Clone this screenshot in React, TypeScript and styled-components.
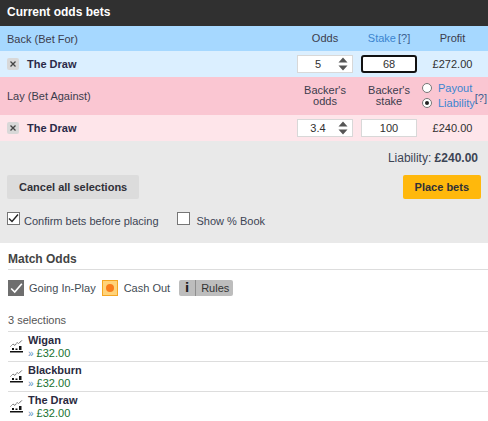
import React from "react";
import styled, { createGlobalStyle } from "styled-components";

const Global = createGlobalStyle`
  html, body { margin: 0; padding: 0; background: #fff; }
  body { font-family: "Liberation Sans", Arial, sans-serif; font-size: 11px; color: #303030; }
  * { box-sizing: border-box; }
`;

const Page = styled.div`
  width: 488px;
  height: 421px;
  overflow: hidden;
`;

const Title = styled.div`
  height: 26px;
  background: #303030;
  color: #fff;
  font-weight: 700;
  font-size: 12px;
  line-height: 24px;
  padding-left: 7px;
`;

const Grid = styled.div<{ $bg: string; $h: number }>`
  display: grid;
  grid-template-columns: 297px 56px 8px 56px 71px;
  align-items: center;
  height: ${(p) => p.$h}px;
  background: ${(p) => p.$bg};
`;

const SideLabel = styled.div`
  padding-left: 7px;
  color: #3c3c4c;
`;

const HeadCell = styled.div<{ $col: number }>`
  grid-column: ${(p) => p.$col};
  text-align: center;
  line-height: 11px;
  color: #3c3c4c;
  white-space: nowrap;
`;

const Link = styled.span`
  color: #3b85d0;
`;

const Help = styled.span`
  color: #3b5f90;
  margin-left: 2px;
`;

const Name = styled.div`
  display: flex;
  align-items: center;
  padding-left: 7px;
  font-weight: 700;
  color: #2a2a48;
`;

const Close = styled.span`
  width: 12px;
  height: 12px;
  margin-right: 8px;
  border-radius: 2px;
  background: #d8d8d8;
  display: flex;
  align-items: center;
  justify-content: center;
`;

const InputBox = styled.div<{ $focus?: boolean }>`
  grid-column: ${(p) => (p.$focus !== undefined ? 4 : 2)};
  position: relative;
  height: 18px;
  background: #fff;
  border: ${(p) => (p.$focus ? "2px solid #111" : "1px solid #d8d8d8")};
  border-radius: ${(p) => (p.$focus ? "3px" : "0")};
  text-align: center;
  line-height: ${(p) => (p.$focus ? "14px" : "16px")};
`;

const OddsValue = styled.span`
  display: block;
  width: 40px;
  text-align: center;
`;

const Spinner = styled.svg`
  position: absolute;
  right: 4px;
  top: 1px;
`;

const Profit = styled.div`
  grid-column: 5;
  text-align: center;
  color: #303030;
`;

const RadioStack = styled.div`
  grid-column: 5;
  position: relative;
  display: flex;
  flex-direction: column;
  gap: 1px;
  height: 30px;
  margin-left: 5px;
`;

const RadioRow = styled.div`
  display: flex;
  align-items: center;
  height: 14px;
  gap: 6px;
  color: #3b85d0;
`;

const Radio = styled.span<{ $on?: boolean }>`
  width: 10px;
  height: 10px;
  border-radius: 50%;
  border: 1px solid #767676;
  background: #fff;
  display: flex;
  align-items: center;
  justify-content: center;
  &::after {
    content: "";
    width: 4px;
    height: 4px;
    border-radius: 50%;
    background: ${(p) => (p.$on ? "#222" : "transparent")};
  }
`;

const RadioHelp = styled.span`
  position: absolute;
  right: 1px;
  top: 11px;
  color: #3b5f90;
`;

const Panel = styled.div`
  height: 102px;
  background: #e9e9e9;
  padding: 9px 7px 0;
`;

const LiabilityLine = styled.div`
  text-align: right;
  padding-right: 3px;
  line-height: 16px;
  font-size: 12px;
  color: #3c4454;
`;

const Buttons = styled.div`
  display: flex;
  justify-content: space-between;
  margin-top: 9px;
`;

const Button = styled.div<{ $primary?: boolean }>`
  height: 24px;
  line-height: 24px;
  border-radius: 2px;
  font-weight: 700;
  padding: 0 12px;
  background: ${(p) => (p.$primary ? "#ffb80c" : "#dcdcdc")};
  color: #303038;
`;

const Checks = styled.div`
  display: flex;
  align-items: flex-start;
  margin-top: 13px;
`;

const CheckLabel = styled.label<{ $gap: number }>`
  display: flex;
  align-items: flex-start;
  gap: ${(p) => p.$gap}px;
  margin-right: 18px;
  color: #3c4454;
`;

const CheckText = styled.span`
  padding-top: 3px;
  line-height: 13px;
`;

const Box = styled.span`
  width: 13px;
  height: 13px;
  border: 1px solid #767676;
  background: #fff;
  display: flex;
  align-items: center;
  justify-content: center;
`;

const Market = styled.div`
  padding: 0 0 0 8px;
`;

const MarketTitle = styled.div`
  height: 26px;
  line-height: 32px;
  font-size: 12px;
  font-weight: 700;
  color: #444;
  border-bottom: 1px solid #ddd;
  box-sizing: content-box;
`;

const Features = styled.div`
  display: flex;
  align-items: center;
  height: 18px;
  margin-top: 9px;
`;

const GreyTick = styled.span`
  width: 16px;
  height: 16px;
  background: #6e6e6e;
  display: flex;
  align-items: center;
  justify-content: center;
  margin-right: 5px;
`;

const FeatureText = styled.span`
  margin-right: 6px;
  color: #444c54;
`;

const CashIcon = styled.span`
  width: 16px;
  height: 16px;
  background: #ffd37a;
  border: 1px solid #f5a623;
  display: flex;
  align-items: center;
  justify-content: center;
  margin-right: 6px;
  &::after {
    content: "";
    width: 8px;
    height: 8px;
    border-radius: 50%;
    background: #f97c1c;
  }
`;

const Rules = styled.span`
  display: flex;
  height: 16px;
  background: #bdbdbd;
  border-radius: 2px;
  line-height: 16px;
  margin-left: 3px;
`;

const RulesI = styled.span`
  width: 17px;
  text-align: center;
  font-weight: 700;
  font-family: "DejaVu Sans", sans-serif;
  font-size: 12px;
  border-right: 1px solid #8e8e8e;
  color: #222;
`;

const RulesText = styled.span`
  padding: 0 4px 0 5px;
  color: #333;
`;

const Count = styled.div`
  margin-top: 16px;
  height: 18px;
  line-height: 14px;
  color: #555;
  font-size: 11px;
  border-bottom: 1px solid #ddd;
  box-sizing: content-box;
`;

const Runner = styled.div`
  display: flex;
  height: 30px;
  border-bottom: 1px solid #ddd;
`;

const RunnerIcon = styled.svg`
  margin: 8px 5px 0 2px;
  flex: none;
`;

const RunnerText = styled.div`
  line-height: 13px;
  padding-top: 2px;
`;

const RunnerName = styled.div`
  font-weight: 700;
  font-size: 11px;
  color: #2a2a40;
`;

const RunnerAmount = styled.div`
  color: #17702f;
`;

const Chevrons = styled.span`
  color: #5a8fc0;
  font-size: 10px;
`;

const X = () => (
  <svg width="8" height="8" viewBox="0 0 8 8">
    <path d="M1.5 1.5l5 5M6.5 1.5l-5 5" stroke="#444" strokeWidth="1.3" />
  </svg>
);

const Spin = () => (
  <Spinner width="10" height="14" viewBox="0 0 10 14">
    <path d="M5 .5l4.5 5H.5zM5 13.5l4.5-5H.5z" fill="#555" />
  </Spinner>
);

const Tick = ({ c, w = 11 }: { c: string; w?: number }) => (
  <svg width={w} height={w} viewBox="0 0 11 11">
    <path d="M1 5.5l3 3 6-7" fill="none" stroke={c} strokeWidth="1.4" />
  </svg>
);

const Chart = () => (
  <RunnerIcon width="13" height="13" viewBox="0 0 13 13">
    <path d="M.5 6.5l2.5-2.5 2 1.5L7 2.5l1.5 1 4-3.5" fill="none" stroke="#333" strokeWidth="0.8" strokeDasharray="1.2 0.5" />
    <path d="M2 8h2v2H2zM5.5 8.5h2V10h-2zM9 6h2.5v4H9z" fill="#111" />
    <path d="M0 11h13v1.5H0z" fill="#111" />
  </RunnerIcon>
);

const runners = ["Wigan", "Blackburn", "The Draw"];

export default function App() {
  return (
    <Page>
      <Global />
      <Title>Current odds bets</Title>
      <Grid $bg="#a6d8ff" $h={25}>
        <SideLabel>Back (Bet For)</SideLabel>
        <HeadCell $col={2}>Odds</HeadCell>
        <HeadCell $col={4}><Link>Stake</Link><Help>[?]</Help></HeadCell>
        <HeadCell $col={5}>Profit</HeadCell>
      </Grid>
      <Grid $bg="#dbefff" $h={26}>
        <Name><Close><X /></Close>The Draw</Name>
        <InputBox><OddsValue>5</OddsValue><Spin /></InputBox>
        <InputBox $focus>68</InputBox>
        <Profit>£272.00</Profit>
      </Grid>
      <Grid $bg="#fac6d2" $h={38}>
        <SideLabel>Lay (Bet Against)</SideLabel>
        <HeadCell $col={2}>Backer's<br />odds</HeadCell>
        <HeadCell $col={4}>Backer's<br />stake</HeadCell>
        <RadioStack>
          <RadioRow><Radio />Payout</RadioRow>
          <RadioRow><Radio $on />Liability</RadioRow>
          <RadioHelp>[?]</RadioHelp>
        </RadioStack>
      </Grid>
      <Grid $bg="#fee5ea" $h={26}>
        <Name><Close><X /></Close>The Draw</Name>
        <InputBox><OddsValue>3.4</OddsValue><Spin /></InputBox>
        <InputBox $focus={false}>100</InputBox>
        <Profit>£240.00</Profit>
      </Grid>
      <Panel>
        <LiabilityLine>Liability: <b>£240.00</b></LiabilityLine>
        <Buttons>
          <Button>Cancel all selections</Button>
          <Button $primary>Place bets</Button>
        </Buttons>
        <Checks>
          <CheckLabel $gap={4}><Box><Tick c="#222" /></Box><CheckText>Confirm bets before placing</CheckText></CheckLabel>
          <CheckLabel $gap={7}><Box /><CheckText>Show % Book</CheckText></CheckLabel>
        </Checks>
      </Panel>
      <Market>
        <MarketTitle>Match Odds</MarketTitle>
        <Features>
          <GreyTick><Tick c="#fff" w={13} /></GreyTick>
          <FeatureText>Going In-Play</FeatureText>
          <CashIcon />
          <FeatureText>Cash Out</FeatureText>
          <Rules><RulesI>i</RulesI><RulesText>Rules</RulesText></Rules>
        </Features>
        <Count>3 selections</Count>
        {runners.map((r) => (
          <Runner key={r}>
            <Chart />
            <RunnerText>
              <RunnerName>{r}</RunnerName>
              <RunnerAmount><Chevrons>»</Chevrons> £32.00</RunnerAmount>
            </RunnerText>
          </Runner>
        ))}
      </Market>
    </Page>
  );
}
